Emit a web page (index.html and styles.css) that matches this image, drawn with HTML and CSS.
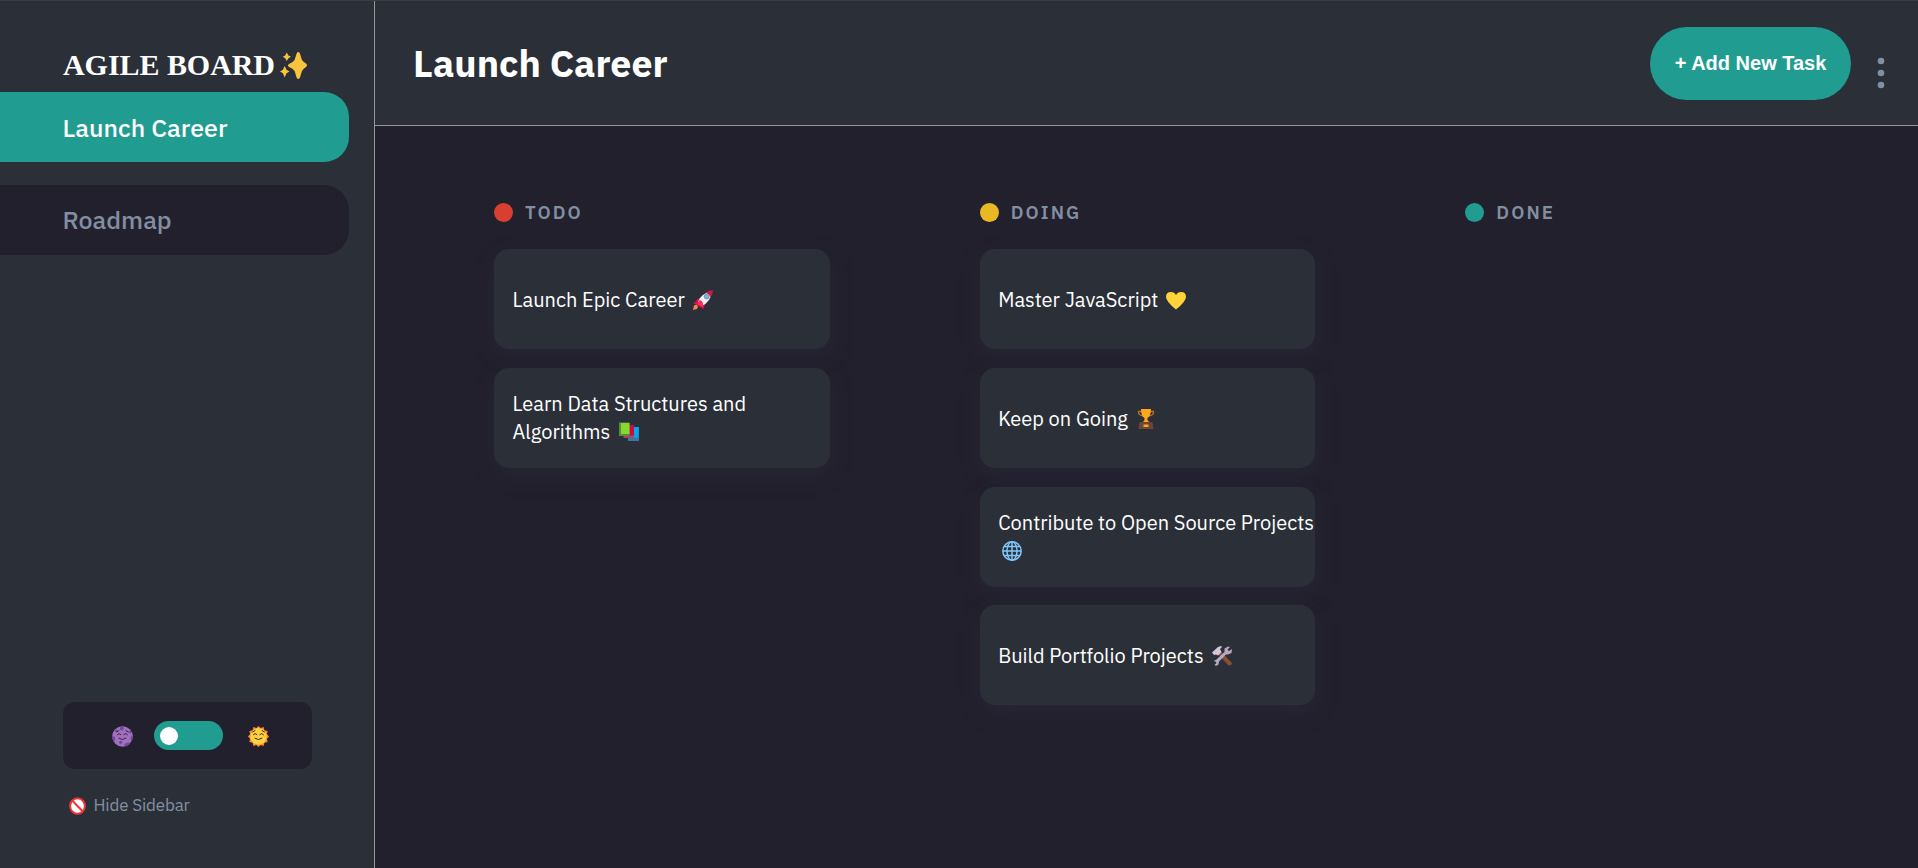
FILE: index.html
```html
<!DOCTYPE html>
<html lang="en">
<head>
<meta charset="utf-8">
<title>Agile Board</title>
<link rel="stylesheet" href="styles.css">
</head>
<body>
<div class="app">
  <aside class="sidebar">
    <div class="logo"><span class="logo-text">AGILE BOARD</span>
      <svg class="logo-icon" viewBox="0 0 27 27"><g fill="#fbc33c"><path d="M18.300 0C20.300 0 20.800 5 22 8Q23.500 10 26 11.500 28 13.300 26 15 23.500 16.500 22 19C20.800 22 20.300 27 18.300 27S15.800 22 14.600 19Q13 16.500 9 15 7 13.300 9 12 13 10.500 14.600 8C15.800 5 16.300 0 18.300 0Z"/><path d="M6.800.5 8.400 3.400 11 4.800 8.400 6.200 6.800 9 5.200 6.200 2.700 4.800 5.200 3.400Z"/><path d="M4.700 14 6.500 17.700 9.500 19.500 6.500 21.300 4.700 25.500 2.900 21.300 0 19.500 2.900 17.700Z"/></g></svg>
    </div>
    <nav class="nav">
      <a class="nav-item active">Launch Career</a>
      <a class="nav-item">Roadmap</a>
    </nav>
    <div class="theme">
      <svg class="face" viewBox="0 0 21 21"><circle cx="10.500" cy="10.500" r="10.300" fill="#9f6fc0"/><g fill="#74469b"><circle cx="9.800" cy="2.600" r="1.900"/><circle cx="4.300" cy="4.800" r="1.200"/><circle cx="18.200" cy="6" r="1.200"/><path d="M.2 10Q3 10 3.200 12.500T1.500 15.500Q.2 13 .2 10ZM20.800 9.500Q18.500 10 18.500 12.500T20 14Q21 12 20.800 9.500ZM12.500 20.500Q12 17.500 15 16.800T18.300 17.500Q16 20.300 12.500 20.500Z"/><circle cx="8.600" cy="16.300" r="1.600"/></g><g class="features"><path d="M5.300 8.700Q7 6.300 8.900 8.500M11.800 8.500Q13.600 6.300 15.500 8.700M6.900 12.300Q10.400 15 13.900 12.300M4.600 6 7 4.600M14 4.600 16.400 6"/></g></svg>
      <span class="switch"><i class="knob"></i></span>
      <svg class="face" viewBox="0 0 21 21"><path fill="#fb8a35" d="M10.500 0 12.600 1.900 15.600 1 16.400 4.200 19.700 5.100 18.900 8 21 10.500 18.900 12.900 19.700 16 16.400 16.800 15.600 20 12.600 19.100 10.500 21 8.400 19.100 5.400 20 4.600 16.800 1.300 16 2.100 12.900 0 10.500 2.100 8 1.300 5.100 4.600 4.200 5.400 1 8.400 1.900Z"/><circle cx="10.500" cy="10.500" r="8.200" fill="#ffd23f"/><g class="features"><path d="M5.300 8.700Q7 6.300 8.900 8.500M11.800 8.500Q13.600 6.300 15.500 8.700M6.900 12.300Q10.400 15 13.900 12.300M4.600 6 7 4.600M14 4.600 16.400 6"/></g></svg>
    </div>
    <div class="hide">
      <svg class="hide-icon" viewBox="0 0 17 18"><ellipse cx="8.500" cy="9" rx="7.400" ry="7.800" fill="#fff" stroke="#f03438" stroke-width="2"/><path d="M3.200 3.500 13.800 14.500" stroke="#f03438" stroke-width="2"/></svg>
      <span>Hide Sidebar</span>
    </div>
  </aside>
  <div class="main">
    <header class="header">
      <h1>Launch Career</h1>
      <button class="add">+ Add New Task</button>
      <svg class="more" viewBox="0 0 8 32"><g fill="#828fa3"><circle cx="4" cy="4" r="3.300"/><circle cx="4" cy="16" r="3.300"/><circle cx="4" cy="28" r="3.300"/></g></svg>
    </header>
    <main class="board">
      <section class="column">
        <h2><i class="dot todo"></i><span>TODO</span></h2>
        <article class="card"><p>Launch Epic Career<svg class="emoji" viewBox="0 0 20 20"><path fill="#d01446" d="M0 14 5 8.500 9 9 12 14 10.500 19 8.500 18 3 14Z"/><path fill="#f1eff3" d="M5 12Q7 4 19 1 18 12 8.500 16Z"/><path fill="#d01446" d="M12.500 2.800Q16 .2 20 0 20 4 17.300 7.500Q16.500 4 12.500 2.800Z"/><path fill="#fb2e5d" d="M6.500 10Q11 11 10 17L6 15.500 4 14Z"/><circle cx="13.700" cy="6.500" r="2.500" fill="#7cb4de" stroke="#5a7892" stroke-width=".6"/><path fill="#ff8153" d="M1 15.500 3.500 14.500 5 16.500 4 19 0 20Z"/></svg></p></article>
        <article class="card two-line"><p>Learn Data Structures and<br>Algorithms<svg class="emoji books" viewBox="0 0 20 20"><path fill="#3f76a0" d="M9 16 11 5H20V19H9Z"/><path fill="#00a8f0" d="M11 5H19.500V15.500H11Z"/><path fill="#a04967" d="M4.500 4H14.500V16H4.500Z"/><path fill="#cf084c" d="M6 3H15V13.500H6Z"/><path fill="#598d37" d="M0 .5H10.500V14H0Z"/><path fill="#86d72f" d="M2 1H10.500V12H2Z"/></svg></p></article>
      </section>
      <section class="column">
        <h2><i class="dot doing"></i><span>DOING</span></h2>
        <article class="card"><p>Master JavaScript<svg class="emoji" viewBox="0 0 20 20"><path fill="#ffd43b" d="M10 19.500Q0 11.500 0 7 0 2 5 2 8.500 2 10 5 11.500 2 15 2 20 2 20 7 20 11.500 10 19.500Z"/></svg></p></article>
        <article class="card"><p>Keep on Going<svg class="emoji" viewBox="0 0 20 20"><path fill="none" stroke="#b9702b" stroke-width="1.300" d="M6 2.500H2.500Q2 6.500 7.500 7M14 2.500H17.500Q18 6.500 12.500 7"/><path fill="#ffa51f" d="M5 0H15Q15 7 11.500 9V11L13 13H7L8.500 11V9Q5 7 5 0Z"/><path fill="#6d4534" d="M3.500 13H16.500L17.500 20H2.500Z"/><path fill="#ffa51f" d="M7.500 15.500H12.500V18H7.500Z"/></svg></p></article>
        <article class="card two-line"><p>Contribute to Open Source Projects<br><svg class="emoji line-start" viewBox="0 0 20 20"><g fill="none" stroke="#80c7fb" stroke-width="1.500"><circle cx="10" cy="10" r="9.200"/><ellipse cx="10" cy="10" rx="5" ry="9.200"/><path d="M10 1V19M1 10H19M2.500 5.500H17.500M2.500 14.500H17.500"/></g></svg></p></article>
        <article class="card"><p>Build Portfolio Projects<svg class="emoji" viewBox="0 0 20 20"><path fill="#8d4c38" d="M6 8 9 5.500 20 17Q20 19 17.500 19.500L16 19Z"/><path fill="#d3c6d7" d="M0 6.500 6 1 9 0 10 1 8 3 9.500 6 6 9.500 4 8.500 2 9Z"/><path fill="#b6a9bd" d="M1.500 15 4.500 13.500 12.500 6 12.500 2.500 16 0.500 18 1 15.500 3.500 17 5 20 3 19.500 7 16 8.500 14 8.500 7 15.500 6.500 18.500 4 20 2.500 19 4.500 17 3.500 15.500Z"/></svg></p></article>
      </section>
      <section class="column">
        <h2><i class="dot done"></i><span>DONE</span></h2>
      </section>
    </main>
  </div>
</div>
</body>
</html>
```
FILE: styles.css
```css
* { box-sizing: border-box; }
body { margin: 0; background: #22202c; font-family: "IBM Plex Sans", Roboto, sans-serif; }
.app { display: flex; width: 1918px; height: 868px; border-top: 1px solid #3c3c3c; overflow: hidden; }
.sidebar { display: flex; flex-direction: column; flex: none; width: 375px; height: 867px; background: #2b2f38; border-right: 1px solid #979797; }
.logo { display: flex; height: 91px; padding: 47px 0 0 63px; color: #fff; font: bold 30px/34px "Liberation Serif", serif; }
.logo-text { width: 217px; white-space: nowrap; letter-spacing: -.05px; }
.logo-icon { width: 27px; height: 27px; margin-top: 4px; }
.nav { display: flex; flex-direction: column; gap: 23px; }
.nav-item { display: flex; align-items: center; width: 349px; height: 70px; padding-left: 62.5px; border-radius: 0 25px 25px 0; background: #22202c; color: #828fa3; font-size: 25px; font-weight: 500; }
.nav-item:last-child { padding-bottom: 1px; }
.nav-item.active { background: #219c90; color: #fff; }
.theme { display: flex; align-items: center; width: 249px; height: 67px; margin: auto 0 0 63px; padding-left: 48.5px; border-radius: 12px; background: #22202c; }
.face { width: 21px; height: 21px; margin-top: 2px; }
.features { fill: none; stroke: #3c2630; stroke-width: 1; stroke-linecap: round; }
.switch { display: flex; align-items: center; width: 69px; height: 29px; margin: 0 25px 0 21.5px; padding-left: 6px; border-radius: 15px; background: #219c90; }
.knob { width: 18px; height: 18px; border-radius: 50%; background: #fff; }
.hide { display: flex; align-items: center; gap: 8px; height: 26px; margin: 23px 0 50px 68.5px; color: #828fa3; font-size: 17px; letter-spacing: -.15px; }
.hide-icon { width: 17px; height: 18px; margin-top: 1px; }
.main { flex: 1; }
.header { display: flex; height: 125px; padding: 26px 33.5px 0 38px; background: #2b2f38; border-bottom: 1px solid #979797; }
h1 { margin: 13px auto 0 0; color: #fff; font-size: 37.5px; line-height: 46px; font-weight: 700; white-space: nowrap; }
.add { width: 201px; height: 73px; padding: 0; border: 0; border-radius: 37px; background: #219c90; color: #fff; font: bold 20px "Liberation Sans", Arial, sans-serif; }
.more { width: 8px; height: 32px; margin: 30px 0 0 25.5px; }
.board { display: grid; grid-template-columns: repeat(3, 1fr); gap: 150px; padding: 77px 117px 0 119px; }
h2 { display: flex; align-items: center; gap: 12px; height: 19px; margin: 0 0 27px; color: #828fa3; font-size: 18.5px; line-height: 19px; font-weight: 600; letter-spacing: 2.1px; }
.dot { width: 19px; height: 19px; border-radius: 50%; }
.todo { background: #d83f31; }
.doing { background: #e9b824; }
.done { background: #219c90; }
.card { position: relative; display: flex; align-items: center; height: 100px; margin-bottom: 18.75px; padding: 2px 0 0 18.5px; border-radius: 15px; background: #2b2f38; box-shadow: 1px 8px 22px rgba(54, 54, 80, .28); color: #fff; font-size: 20px; }
.two-line { padding-top: 0; }
p { margin: 0; line-height: 28px; white-space: nowrap; }
.emoji { width: 20px; height: 20px; margin-left: 8px; vertical-align: -3px; }
.books { margin-left: 9px; }
.line-start { margin-left: 3.5px; }
```
